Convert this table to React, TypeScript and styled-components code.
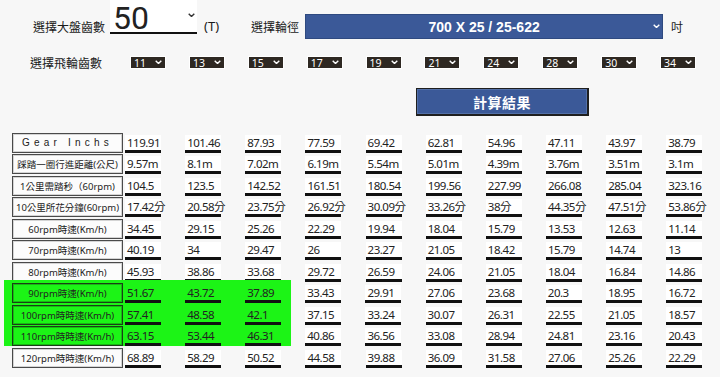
import React from "react";
import styled, { createGlobalStyle } from "styled-components";

const GlobalStyle = createGlobalStyle`
    * { box-sizing: border-box; }
    body {
        margin: 0;
        background: #f7f7f7;
        font-family: "Noto Sans", "Noto Sans CJK TC", sans-serif;
        color: #222;
    }
`;

const GREEN = "#1cf416";

const Page = styled.div`
    width: 720px;
    height: 377px;
`;

const TopRow = styled.div`
    display: flex;
    align-items: center;
    height: 40px;
    padding: 13px 0 0 33px;
`;

const Label = styled.span<{ size?: number; ml?: number; latin?: boolean }>`
    font-family: ${(p) => (p.latin ? `"Noto Sans", sans-serif` : `"Noto Sans CJK TC", sans-serif`)};
    font-size: ${(p) => p.size || 12}px;
    line-height: 1.3;
    margin-left: ${(p) => p.ml || 0}px;
    white-space: nowrap;
    color: #1a1a1a;
`;

const ChainSelect = styled.div`
    align-self: flex-start;
    margin: -13px 0 0 5px;
    width: 87px;
    height: 34px;
    background: #fff;
    border-bottom: 2px solid #111;
    position: relative;
`;

const ChainValue = styled.span`
    display: block;
    font-family: Roboto, sans-serif;
    font-size: 32px;
    line-height: 32px;
    padding: 2px 0 0 3px;
    color: #222;
`;

const ChainChevron = styled.span`
    position: absolute;
    right: 2px;
    top: 13px;
    display: flex;
`;

const WheelSelect = styled.div`
    margin-left: 6px;
    width: 358px;
    height: 25px;
    background: #3b5998;
    border: 1px solid #2f4a80;
    display: flex;
    align-items: center;
    justify-content: center;
    position: relative;
    color: #fff;
    font-family: "Liberation Sans", sans-serif;
    font-weight: bold;
    font-size: 14px;
`;

const WheelChevron = styled.span`
    position: absolute;
    right: 2px;
    top: 9px;
    display: flex;
`;

const CogRow = styled.div`
    display: flex;
    align-items: center;
    height: 11px;
    margin-top: 17px;
    padding-left: 30px;
`;

const Cogs = styled.div`
    display: flex;
    gap: 24.9px;
    margin-left: 29px;
`;

const CogSelect = styled.div`
    width: 34px;
    height: 11px;
    background: #2e2822;
    outline: 1px solid #fff;
    color: #fff;
    font-family: "Noto Sans", sans-serif;
    font-size: 10.5px;
    line-height: 11px;
    padding: 1px 0 0 3px;
    position: relative;
`;

const CogChevron = styled.span`
    position: absolute;
    right: 3px;
    top: 3px;
    display: flex;
`;

const ButtonRow = styled.div`
    margin-top: 20px;
    padding-left: 416px;
`;

const CalcButton = styled.button`
    width: 173px;
    height: 28px;
    background: #3b5998;
    border: 1px solid #1f1f1f;
    border-right-width: 2px;
    border-bottom-width: 2px;
    box-shadow: inset 0 0 0 1px #5370a8;
    color: #fff;
    font-family: "Noto Sans CJK TC", sans-serif;
    font-weight: bold;
    font-size: 14px;
    letter-spacing: 0.5px;
    padding: 0;
`;

const Table = styled.div`
    margin-top: 15px;
    padding-left: 4px;
`;

const Row = styled.div<{ pad?: boolean }>`
    display: flex;
    align-items: flex-end;
    height: 21.5px;
    padding-left: ${(p) => (p.pad ? 8 : 0)}px;
`;

const LabelCell = styled.div<{ green?: boolean; spaced?: boolean }>`
    width: 111px;
    height: 20px;
    margin-right: 2px;
    border: 1px solid ${(p) => (p.green ? "#1b3d16" : "#4a4a4a")};
    box-shadow: inset 0 0 0 1px ${(p) => (p.green ? "#17b814" : "#d4d4d4")};
    background: ${(p) => (p.green ? GREEN : "#fcfcfc")};
    display: flex;
    align-items: center;
    justify-content: center;
    font-family: ${(p) => (p.spaced ? `"Liberation Sans", sans-serif` : `"Noto Sans", "Noto Sans CJK TC", sans-serif`)};
    font-size: ${(p) => (p.spaced ? 10 : 9.5)}px;
    letter-spacing: ${(p) => (p.spaced ? 4.2 : 0)}px;
    white-space: nowrap;
    color: #222;
`;

const DataCell = styled.div<{ green?: boolean; last?: boolean }>`
    width: 36px;
    height: 18px;
    margin-right: ${(p) => (p.last ? 0 : 24.15)}px;
    background: ${(p) => (p.green ? "transparent" : "#fff")};
    border-bottom: 3px solid #111;
    font-family: "Noto Sans", "Noto Sans CJK TC", sans-serif;
    font-size: 11.5px;
    letter-spacing: -0.5px;
    line-height: 15px;
    padding-left: 2px;
    white-space: nowrap;
    color: #222;
`;

const HighlightGroup = styled.div`
    display: flex;
`;

const GreenBlock = styled.div`
    background: ${GREEN};
    padding: 1.5px 10px 0 8px;
    margin-top: -1.5px;
`;

const RestBlock = styled.div`
    margin-left: 14px;
`;

const Chevron = ({ color, w = 7 }: { color: string; w?: number }) => (
    <svg width={w} height={w * 0.6} viewBox="0 0 10 6">
        <polyline points="1,1 5,5 9,1" fill="none" stroke={color} strokeWidth="2" />
    </svg>
);

const cogs = ["11", "13", "15", "17", "19", "21", "24", "28", "30", "34"];

const labels = [
    "Gear Inchs",
    "踩踏一圈行進距離(公尺)",
    "1公里需踏秒（60rpm)",
    "10公里所花分鐘(60rpm)",
    "60rpm時速(Km/h)",
    "70rpm時速(Km/h)",
    "80rpm時速(Km/h)",
    "90rpm時速(Km/h)",
    "100rpm時時速(Km/h)",
    "110rpm時時速(Km/h)",
    "120rpm時時速(Km/h)"
];

const data: string[][] = [
    ["119.91", "101.46", "87.93", "77.59", "69.42", "62.81", "54.96", "47.11", "43.97", "38.79"],
    ["9.57m", "8.1m", "7.02m", "6.19m", "5.54m", "5.01m", "4.39m", "3.76m", "3.51m", "3.1m"],
    ["104.5", "123.5", "142.52", "161.51", "180.54", "199.56", "227.99", "266.08", "285.04", "323.16"],
    ["17.42分", "20.58分", "23.75分", "26.92分", "30.09分", "33.26分", "38分", "44.35分", "47.51分", "53.86分"],
    ["34.45", "29.15", "25.26", "22.29", "19.94", "18.04", "15.79", "13.53", "12.63", "11.14"],
    ["40.19", "34", "29.47", "26", "23.27", "21.05", "18.42", "15.79", "14.74", "13"],
    ["45.93", "38.86", "33.68", "29.72", "26.59", "24.06", "21.05", "18.04", "16.84", "14.86"],
    ["51.67", "43.72", "37.89", "33.43", "29.91", "27.06", "23.68", "20.3", "18.95", "16.72"],
    ["57.41", "48.58", "42.1", "37.15", "33.24", "30.07", "26.31", "22.55", "21.05", "18.57"],
    ["63.15", "53.44", "46.31", "40.86", "36.56", "33.08", "28.94", "24.81", "23.16", "20.43"],
    ["68.89", "58.29", "50.52", "44.58", "39.88", "36.09", "31.58", "27.06", "25.26", "22.29"]
];

function FullRow({ index }: { index: number }) {
    return (
        <Row pad>
            <LabelCell spaced={index === 0}>{labels[index]}</LabelCell>
            {data[index].map((v, i) => (
                <DataCell key={i} last={i === 9}>
                    {v}
                </DataCell>
            ))}
        </Row>
    );
}

export default function App() {
    const highlighted = [7, 8, 9];

    return (
        <Page>
            <GlobalStyle />
            <TopRow>
                <Label size={12}>選擇大盤齒數</Label>
                <ChainSelect>
                    <ChainValue>50</ChainValue>
                    <ChainChevron>
                        <Chevron color="#333" w={7} />
                    </ChainChevron>
                </ChainSelect>
                <Label size={13} ml={7} latin>
                    (T)
                </Label>
                <Label ml={32}>選擇輪徑</Label>
                <WheelSelect>
                    700 X 25 / 25-622
                    <WheelChevron>
                        <Chevron color="#fff" w={7} />
                    </WheelChevron>
                </WheelSelect>
                <Label ml={8}>吋</Label>
            </TopRow>

            <CogRow>
                <Label>選擇飛輪齒數</Label>
                <Cogs>
                    {cogs.map((c) => (
                        <CogSelect key={c}>
                            {c}
                            <CogChevron>
                                <Chevron color="#fff" w={7} />
                            </CogChevron>
                        </CogSelect>
                    ))}
                </Cogs>
            </CogRow>

            <ButtonRow>
                <CalcButton>計算結果</CalcButton>
            </ButtonRow>

            <Table>
                {[0, 1, 2, 3, 4, 5, 6].map((r) => (
                    <FullRow key={r} index={r} />
                ))}
                <HighlightGroup>
                    <GreenBlock>
                        {highlighted.map((r) => (
                            <Row key={r}>
                                <LabelCell green>{labels[r]}</LabelCell>
                                {data[r].slice(0, 3).map((v, i) => (
                                    <DataCell key={i} green last={i === 2}>
                                        {v}
                                    </DataCell>
                                ))}
                            </Row>
                        ))}
                    </GreenBlock>
                    <RestBlock>
                        {highlighted.map((r) => (
                            <Row key={r}>
                                {data[r].slice(3).map((v, i) => (
                                    <DataCell key={i} last={i === 6}>
                                        {v}
                                    </DataCell>
                                ))}
                            </Row>
                        ))}
                    </RestBlock>
                </HighlightGroup>
                <FullRow index={10} />
            </Table>
        </Page>
    );
}
